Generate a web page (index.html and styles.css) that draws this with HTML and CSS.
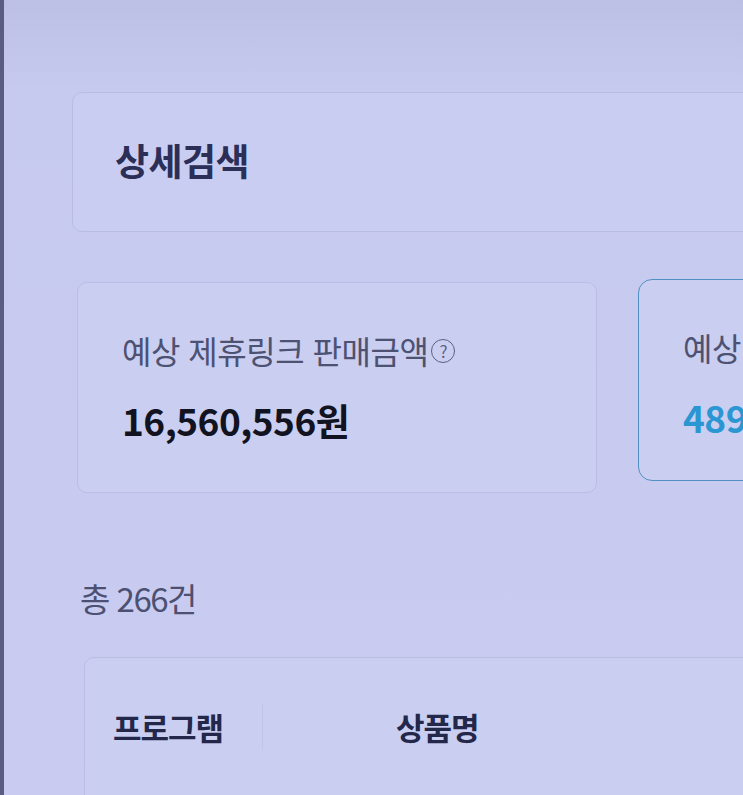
FILE: index.html
```html
<!DOCTYPE html>
<html lang="ko">
<head>
    <meta charset="UTF-8">
    <meta name="viewport" content="width=device-width, initial-scale=1.0">
    <title>제휴링크 리포트</title>
    <link rel="stylesheet" href="styles.css">
</head>
<body>

    <div class="page">
        <!-- 상세검색 -->
        <div class="search-card">
            <h2>상세검색</h2>
        </div>

        <!-- 요약 -->
        <div class="summary">
            <div class="summary-card">
                <p class="label">예상 제휴링크 판매금액<span class="help">?</span></p>
                <p class="value">16,560,556원</p>
            </div>
            <div class="summary-card highlight">
                <p class="label">예상 제휴링크 수익</p>
                <p class="value">489,213원</p>
            </div>
        </div>

        <p class="total">총 266건</p>

        <!-- 목록 -->
        <div class="table-card">
            <div class="table-head">
                <div class="col program">프로그램</div>
                <div class="col product">상품명</div>
            </div>
        </div>
    </div>

</body>
</html>
```

FILE: styles.css
```css
* {
    margin: 0;
    padding: 0;
    box-sizing: border-box;
}

body {
    font-family: "Noto Sans CJK KR", "Noto Sans", sans-serif;
    background: linear-gradient(180deg, #bcc0e4 0%, #c6caee 90px, #c9ccf0 100%);
    color: #23274a;
    width: 743px;
    height: 795px;
    overflow: hidden;
    border-left: 4px solid #5a5d80;
}

.page {
    width: 1100px;
    padding: 92px 0 0 68px;
}

.search-card {
    height: 140px;
    border: 1px solid #b9bde2;
    border-radius: 10px;
    background-color: #c9cdf1;
    padding: 0 0 4px 42px;
    display: flex;
    align-items: center;
}

.search-card h2 {
    font-size: 37px;
    font-weight: 700;
    letter-spacing: -0.5px;
    color: #2b2f58;
}

.summary {
    display: flex;
    align-items: flex-start;
    gap: 41px;
    margin: 50px 0 0 5px;
}

.summary-card {
    flex-shrink: 0;
    width: 520px;
    height: 211px;
    border: 1px solid #babee2;
    border-radius: 10px;
    background-color: #cacef1;
    padding: 47px 0 0 44px;
}

.summary-card.highlight {
    margin-top: -3px;
    height: 202px;
    border: 1.5px solid #4f8fc4;
    border-radius: 14px;
}

.label {
    font-size: 32px;
    line-height: 1.3;
    color: #4d5172;
    letter-spacing: -0.5px;
    display: flex;
    align-items: center;
}

.help {
    width: 24px;
    height: 24px;
    border: 1.5px solid #5c6080;
    border-radius: 50%;
    font-size: 17px;
    line-height: 21px;
    text-align: center;
    color: #5c6080;
    margin-left: 3px;
}

.value {
    font-size: 37px;
    font-weight: 700;
    line-height: 1.3;
    margin-top: 24px;
    color: #121320;
    letter-spacing: -0.5px;
}

.highlight .value {
    color: #2a96d2;
}

.total {
    font-size: 33px;
    color: #4c5072;
    letter-spacing: -1.5px;
    margin: 84px 0 0 8px;
    line-height: 1.3;
}

.table-card {
    height: 300px;
    margin: 37px 0 0 12px;
    border: 1px solid #babee2;
    border-radius: 10px;
    background-color: #cacef1;
}

.table-head {
    display: flex;
    padding-top: 46px;
}

.col {
    font-size: 31px;
    font-weight: 700;
    color: #23274a;
    letter-spacing: -1px;
}

.program {
    width: 178px;
    padding-left: 28px;
    border-right: 1px solid #c0c4e6;
}

.product {
    padding-left: 133px;
}
```
